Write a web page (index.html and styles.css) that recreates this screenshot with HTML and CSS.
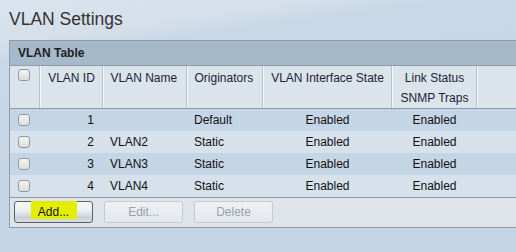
FILE: index.html
```html
<!DOCTYPE html>
<html>
<head>
<meta charset="utf-8">
<link rel="stylesheet" href="styles.css">
</head>
<body>
<h1 class="title">VLAN Settings</h1>
<div class="panel">
  <div class="caption">VLAN Table</div>
  <table class="grid">
    <colgroup>
      <col class="c1"><col class="c2"><col class="c3"><col class="c4"><col class="c5"><col class="c6"><col>
    </colgroup>
    <thead>
      <tr>
        <th class="chk"><span class="box"></span></th>
        <th class="center">VLAN ID</th>
        <th class="left">VLAN Name</th>
        <th class="left">Originators</th>
        <th class="center">VLAN Interface State</th>
        <th class="center">Link Status<br>SNMP Traps</th>
        <th class="last"></th>
      </tr>
    </thead>
    <tbody>
      <tr class="odd"><td class="chk"><span class="box"></span></td><td class="num">1</td><td class="left"></td><td class="left">Default</td><td class="center">Enabled</td><td class="center">Enabled</td><td></td></tr>
      <tr class="even"><td class="chk"><span class="box"></span></td><td class="num">2</td><td class="left">VLAN2</td><td class="left">Static</td><td class="center">Enabled</td><td class="center">Enabled</td><td></td></tr>
      <tr class="odd"><td class="chk"><span class="box"></span></td><td class="num">3</td><td class="left">VLAN3</td><td class="left">Static</td><td class="center">Enabled</td><td class="center">Enabled</td><td></td></tr>
      <tr class="even"><td class="chk"><span class="box"></span></td><td class="num">4</td><td class="left">VLAN4</td><td class="left">Static</td><td class="center">Enabled</td><td class="center">Enabled</td><td></td></tr>
    </tbody>
  </table>
  <div class="actions">
    <button class="btn primary"><span class="mark"></span><span class="lbl">Add...</span></button>
    <button class="btn disabled">Edit...</button>
    <button class="btn disabled">Delete</button>
  </div>
</div>
</body>
</html>
```
FILE: styles.css
```css
html, body {
  margin: 0;
  padding: 0;
}
body {
  width: 516px;
  height: 252px;
  overflow: hidden;
  font-family: "Liberation Sans", Arial, sans-serif;
  background: linear-gradient(172deg, #dbe4ee 0%, #d4dfea 14%, #c9d8e7 19%, #c6d6e6 60%, #c5d5e5 100%);
}
.title {
  margin: 9px 0 0 9px;
  font-size: 17.5px;
  line-height: 20px;
  font-weight: normal;
  color: #333;
}
.panel {
  margin: 11px 0 0 9px;
  border: 1px solid #8e9ba6;
  border-right: none;
}
.caption {
  height: 24px;
  line-height: 24px;
  padding-left: 8px;
  font-size: 12px;
  font-weight: bold;
  color: #1e1e1e;
  background: #a5b9ca;
  border-bottom: 1px solid #8e9ba6;
}
.grid {
  border-collapse: collapse;
  table-layout: fixed;
  width: 100%;
  font-size: 12px;
}
.c1 { width: 30px; }
.c2 { width: 63px; }
.c3 { width: 84px; }
.c4 { width: 76px; }
.c5 { width: 129px; }
.c6 { width: 85px; }
.grid th {
  height: 40px;
  padding: 2px 0 0 0;
  vertical-align: top;
  font-weight: normal;
  line-height: 20px;
  color: #1d1d35;
  background: #dbe3eb;
  border-right: 1px solid #f5f8fa;
  box-shadow: inset -1px 0 0 #b5c1cb;
  border-bottom: 1px solid #8e9ba6;
}
.grid th.last {
  border-right: none;
  box-shadow: none;
}
.grid td {
  height: 22px;
  padding: 0;
  color: #111;
  line-height: 22px;
}
.grid th.chk, .grid td.chk {
  padding-left: 8px;
}
.grid th.chk {
  padding-top: 3px;
  height: 39px;
}
.grid td.chk {
  vertical-align: middle;
}
.left { text-align: left; padding-left: 7px !important; }
.center { text-align: center; }
.num { text-align: right; padding-right: 9px !important; }
.odd td { background: #c4d5e5; }
.even td { background: #d7e1eb; }
.grid tbody tr:last-child td {
  border-bottom: 1px solid #8e9ba6;
}
.box {
  display: block;
  width: 10px;
  height: 10px;
  border: 1px solid #8f99a2;
  border-radius: 3px;
  background: linear-gradient(#f4f4f4, #dcdcdc);
}
.actions {
  display: flex;
  gap: 11px;
  padding: 3px 0 4px 4px;
  background: #dee4ea;
}
.btn {
  position: relative;
  width: 79px;
  height: 22px;
  padding: 0;
  font-family: "Liberation Sans", Arial, sans-serif;
  font-size: 12px;
  border-radius: 3px;
}
.primary {
  color: #111;
  border: 1px solid #5c6168;
  background: linear-gradient(#f6f7f8 0%, #eceff2 45%, #c9d0d7 75%, #d8dde2 100%);
}
.mark {
  position: absolute;
  left: 16px;
  top: -1px;
  width: 46px;
  height: 18px;
  background: #e3ee00;
}
.lbl {
  position: relative;
}
.disabled {
  color: #9aa1a7;
  border: 1px solid #c3cad0;
  background: linear-gradient(#eef1f4, #e3e8ed);
}
```
